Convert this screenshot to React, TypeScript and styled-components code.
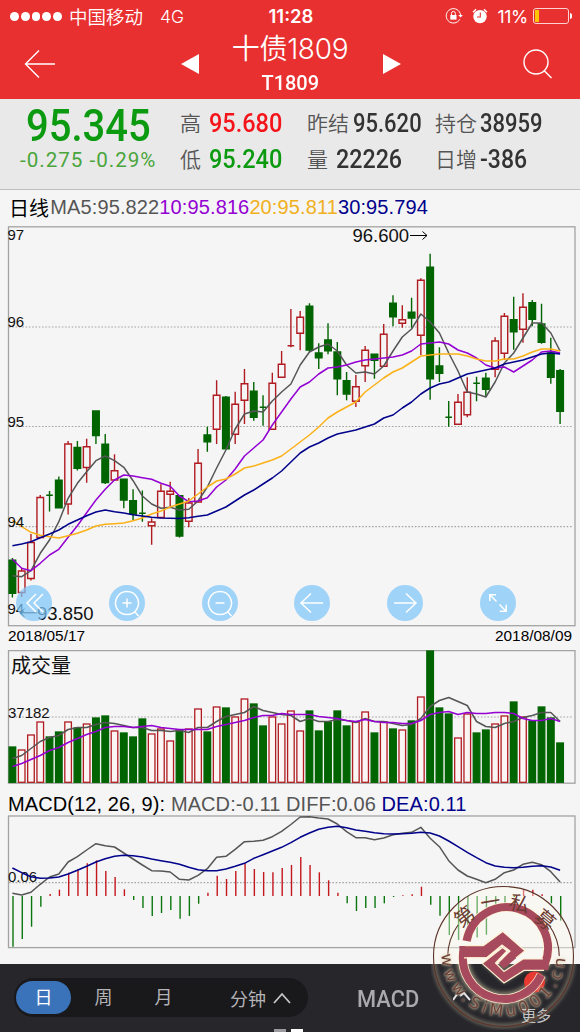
import { styled, createGlobalStyle } from 'styled-components';

const RED = '#b01c22';
const GREEN = '#006400';
const GRAY = '#555';
const PURPLE = '#9400d3';
const ORANGE = '#fbb117';
const NAVY = '#00008b';

const FIRST_X = 12.4;
const STEP = 9.283;

const getX = (index: number) => FIRST_X + STEP * index;

// [body top, body bottom, wick top, wick bottom, rising]
const CANDLES = [
  [560.3, 593.3, 558, 597.5, 0],
  [571, 592.5, 568, 597, 1],
  [542.5, 578.5, 534, 580.5, 1],
  [497.5, 537.5, 495, 537.5, 1],
  [495.3, 495.3, 491, 511.5, 0],
  [480.3, 507.7, 476.5, 507.7, 0],
  [444, 504, 441, 514.5, 1],
  [447.5, 468.3, 441, 470.5, 0],
  [446.7, 467.5, 438.7, 482.7, 1],
  [411, 435.5, 411, 444, 0],
  [444.3, 482.6, 434, 484, 0],
  [470.7, 480, 454.3, 480, 1],
  [479.3, 500, 479.3, 508.3, 0],
  [500.7, 514, 489.3, 520, 0],
  [513.3, 513.3, 490.5, 521.7, 0],
  [522, 525.7, 518.3, 544.7, 1],
  [491.3, 517.5, 484.3, 517.5, 1],
  [491.3, 494.3, 481.7, 506.7, 1],
  [495.7, 536, 495, 537.5, 0],
  [503, 521.3, 498, 527.3, 1],
  [463.3, 502, 449, 502, 1],
  [435, 441.7, 426.7, 451.7, 0],
  [395.3, 429.3, 380.3, 444, 1],
  [397.3, 448.7, 396, 449, 0],
  [404.3, 434.3, 391.7, 444, 1],
  [383.7, 400.3, 369, 424, 1],
  [391.3, 417.3, 382, 420.7, 0],
  [407.3, 407.3, 395.3, 425.7, 0],
  [383.3, 429.3, 372.7, 429.3, 1],
  [364.3, 377.3, 351, 377.3, 1],
  [345.7, 345.7, 309, 347.3, 1],
  [317.3, 333.3, 311, 350.3, 1],
  [306.3, 350, 303.3, 351.7, 0],
  [353, 357.7, 343.3, 369, 0],
  [340, 350.7, 323.3, 354.3, 0],
  [352, 378.7, 342, 395.3, 0],
  [380.7, 394, 372, 400.3, 0],
  [386.7, 401.3, 375, 407, 1],
  [350.3, 365.7, 346, 382, 1],
  [354.3, 360.3, 354.3, 378.7, 0],
  [334.3, 366.3, 324, 366.3, 1],
  [303.3, 316.7, 295.3, 326.3, 0],
  [319.7, 323.3, 305.3, 327.7, 1],
  [312.3, 318, 297.7, 327.7, 0],
  [280.3, 335.3, 278.3, 355, 1],
  [267.3, 378.7, 253.7, 399.7, 0],
  [366, 373.3, 347.3, 382, 0],
  [417.3, 417.3, 401, 426.7, 0],
  [402.3, 424.3, 394, 424.3, 1],
  [392.3, 414.7, 377.3, 417.3, 1],
  [383.3, 383.3, 376.7, 401.3, 0],
  [378.3, 389.3, 372.7, 396.7, 0],
  [341, 369.3, 337.3, 377.3, 1],
  [316.3, 353.3, 313, 360, 1],
  [319.7, 331.7, 296.7, 349.7, 0],
  [307.3, 329.3, 293.3, 342.7, 1],
  [302.7, 319.3, 300, 326.3, 0],
  [324, 342.3, 303.7, 343.7, 0],
  [353, 377.3, 337.7, 383.7, 0],
  [370.7, 411.3, 369, 424, 0],
];

const MA5 = [
  575.7, 576.7, 570.7, 553.3, 540, 521.7, 498.3, 483.3, 471.7, 460.7, 456, 460.7,
  467.3, 480.7, 496, 504, 508.3, 507.3, 510, 509.3, 501, 487, 468, 450, 429, 414,
  411, 412, 401, 392, 384, 365, 352, 347, 344, 351, 365, 373, 372, 374, 366, 351,
  337, 329, 314, 322, 333, 353, 371, 392, 394, 397, 382, 363, 353, 338, 323, 323,
  333, 351,
];

const MA10 = [
  559.3, 568.3, 570.7, 563.3, 555, 549.3, 537.3, 525.7, 512.7, 500, 489.3, 480,
  475, 476, 477.7, 479.3, 483.3, 486.3, 496, 501.7, 501, 497.7, 487, 480, 469,
  456, 448, 440, 425, 412, 399, 387, 382, 374, 368, 367, 365, 362, 360, 359, 358,
  357, 355, 351, 344, 343, 342, 344, 350, 353, 358, 365, 368, 367, 372, 366, 360,
  352, 351, 353,
];

const MA20 = [
  520, 526.7, 532.3, 535.3, 536.7, 538, 535.7, 533.3, 530, 526, 524.3, 523.7, 523,
  520.7, 518, 514, 511, 507, 504, 501, 494, 487, 481, 479, 474, 468, 466, 463,
  460, 456, 449, 442, 435, 427, 418, 412, 407, 402, 392, 385, 378, 372, 368, 362,
  356, 355, 354, 354, 354, 356, 359, 361, 361, 359, 359, 356, 352, 349, 349, 351,
];

const MA30 = [
  545.7, 544, 541.7, 537.7, 534, 530, 524.3, 520, 515.7, 512, 510, 511.7, 513,
  514.7, 516, 517.3, 518, 518.3, 518.5, 517.7, 516.3, 515, 511, 507, 501, 495,
  490, 484, 478, 471, 462, 453, 447, 443, 438, 434, 432, 430, 427, 424, 418, 415,
  408, 402, 394, 388, 384, 382, 378, 374, 372, 370, 368, 364, 362, 360, 357, 354,
  353, 354,
];

// height of every volume bar, and of the two averages over it
const VOLUMES = [
  36, 33, 48, 61, 46, 51, 61, 55, 59, 65, 67, 52, 50, 46, 64, 49, 54, 42, 53, 54,
  74, 51, 76, 75, 66, 84, 79, 57, 66, 59, 72, 52, 72, 52, 61, 72, 57, 61, 71, 50,
  61, 54, 53, 62, 86, 132, 75, 69, 45, 69, 50, 53, 59, 67, 81, 66, 62, 76, 65, 40,
];

const VOLUME_MA5 = [
  24, 27, 34, 41, 45, 47, 53, 55, 55, 58, 60, 59, 57, 55, 55, 52, 52, 51, 52, 50,
  55, 55, 61, 66, 68, 70, 76, 72, 70, 68, 67, 61, 64, 61, 61, 63, 62, 60, 64, 61,
  61, 59, 57, 58, 64, 76, 82, 85, 81, 77, 61, 56, 55, 59, 61, 65, 67, 70, 70, 61,
];

const VOLUME_MA10 = [
  16, 19, 23, 27, 32, 35, 40, 44, 48, 51, 55, 56, 56, 55, 56, 57, 55, 54, 53, 53,
  53, 53, 56, 58, 60, 62, 65, 67, 67, 69, 68, 68, 68, 66, 65, 64, 62, 61, 63, 61,
  60, 60, 59, 59, 62, 68, 70, 71, 68, 70, 69, 69, 70, 70, 69, 64, 62, 62, 64, 61,
];

const MACD_BARS = [
  -50.7, -43, -30.7, -10.7, 2, 6.3, 23.3, 26.7, 32.7, 35.7, 25, 19, 6.7, -4, -12,
  -20, -17, -14, -22.7, -20, -7.7, 3.3, 20.3, 17, 25, 32.7, 27, 24, 23.7, 28, 31,
  39, 31, 23.7, 15.7, 3.3, -7.3, -15, -12, -12, -7.3, -1, 0.7, 1.7, 9.3, -8.7,
  -19.7, -39, -44, -43, -41.5, -38.7, -17, -9, -1, 6.7, 6.3, 1.7, -7.3, -24.7,
];

const DIFF = [
  893.3, 895, 892.3, 884.3, 877, 874, 862, 856.7, 850, 843.7, 845.7, 847, 853,
  859, 865, 870.7, 871, 872, 879.3, 880, 875.3, 868.7, 857.3, 856.3, 849.3, 841.7,
  841.3, 840.3, 836.7, 831.3, 824.5, 817, 816.7, 818, 819, 824, 831.7, 837.7,
  837.7, 839.7, 838, 834.7, 833.3, 832.3, 827.3, 838.3, 846.7, 860.7, 870, 876,
  879.3, 882.7, 879.3, 872.7, 870, 864.3, 862.3, 864.7, 871.7, 882,
];

const DEA = [
  868, 872.7, 876.7, 878.3, 878, 877, 874, 870.3, 866.3, 862, 858.7, 856.3, 855.3,
  855.7, 857, 859, 860.7, 862.3, 864.3, 867.3, 869.7, 870.7, 870.7, 869, 866.3,
  863.3, 858.3, 854.7, 851, 847.3, 842.7, 837.3, 833, 829.3, 827.3, 826.3, 827.7,
  830, 831.3, 832.7, 833.7, 834, 833.7, 833.3, 832.3, 833, 836, 841, 846.7, 852.3,
  857.7, 862.7, 866, 867.3, 867.7, 867.3, 866.3, 865.7, 867, 870.3,
];

interface LineProps {
  values: number[];
  color: string;
  base?: number;
}

const Line = ({ values, color, base }: LineProps) => (
  <polyline
    fill="none"
    stroke={color}
    strokeWidth={1.5}
    strokeLinejoin="round"
    points={values
      .map((v, i) => `${getX(i)},${base === undefined ? v : base - v}`)
      .join(' ')}
  />
);

const GridLine = ({ y }: { y: number }) => (
  <line
    x1={9}
    x2={573}
    y1={y}
    y2={y}
    stroke="#a5a5a5"
    strokeWidth={1.2}
    strokeDasharray="1.6 1.7"
  />
);

const PriceChart = () => (
  <Chart viewBox="0 226 580 401" $height={401}>
    <rect x={8.5} y={226.8} width={566.5} height={398.9} />
    {[327, 426.5, 526.7].map((y) => (
      <GridLine key={y} y={y} />
    ))}
    {CANDLES.map(([top, bottom, high, low, rising], i) => {
      const x = getX(i);
      const color = rising ? RED : GREEN;
      if (top === bottom) {
        return (
          <path
            key={i}
            d={`M${x} ${high}V${low}M${x - 3.3} ${top}H${x + 3.3}`}
            stroke={color}
            strokeWidth={1.4}
          />
        );
      }
      return (
        <g key={i} stroke={color} strokeWidth={1.4}>
          <path d={`M${x} ${high}V${top}M${x} ${bottom}V${low}`} />
          <path
            d={`M${x - 3.3} ${top}h6.6V${bottom}h-6.6Z`}
            fill={rising ? '#f5f5f5' : color}
          />
        </g>
      );
    })}
    <Line values={MA5} color={GRAY} />
    <Line values={MA10} color={PURPLE} />
    <Line values={MA20} color={ORANGE} />
    <Line values={MA30} color={NAVY} />
    <AxisText x={7.5} y={240}>97</AxisText>
    <AxisText x={7.5} y={326.7}>96</AxisText>
    <AxisText x={7.5} y={427}>95</AxisText>
    <AxisText x={7.5} y={527}>94</AxisText>
    <AxisText x={7.5} y={613.7}>94</AxisText>
    <AxisText x={352.5} y={242} $size={18.5}>96.600</AxisText>
    <path d="M410 235.5H427M422.5 231.5L427 235.5L422.5 239.5" stroke="#000" fill="none" />
    <AxisText x={37} y={620} $size={18.5}>93.850</AxisText>
    <path d="M37 612.8H20M24.5 608.8L20 612.8L24.5 616.8" stroke="#000" fill="none" />
  </Chart>
);

const VolumeChart = () => (
  <Chart viewBox="0 650 580 134" $height={134}>
    <rect x={8.5} y={650.6} width={566.5} height={132.6} />
    <GridLine y={717} />
    {VOLUMES.map((v, i) => {
      const rising = CANDLES[i][4];
      return (
        <VolumeBar
          key={i}
          x={getX(i) - 3.3}
          y={783 - v}
          width={6.6}
          height={v - 0.7}
          $rising={!!rising}
        />
      );
    })}
    <Line values={VOLUME_MA5} color={GRAY} base={782.5} />
    <Line values={VOLUME_MA10} color={PURPLE} base={782.5} />
    <AxisText x={11} y={672.5} $size={20}>成交量</AxisText>
    <AxisText x={8} y={718.3}>37182</AxisText>
  </Chart>
);

const MacdChart = () => (
  <Chart viewBox="0 815 580 134" $height={134}>
    <rect x={8.5} y={816} width={566.5} height={131.6} />
    <GridLine y={882.6} />
    {MACD_BARS.map((v, i) => (
      <path
        key={i}
        d={`M${getX(i) + 0.6} 896V${896 - v}`}
        stroke={v > 0 ? '#c4171d' : '#0a760e'}
        strokeWidth={1.4}
      />
    ))}
    <AxisText x={8} y={882.3}>0.06</AxisText>
    <Line values={DIFF} color={GRAY} />
    <Line values={DEA} color={NAVY} />
  </Chart>
);

const CHART_BUTTONS = [
  { id: 'rewind', path: 'M20 9L11 18L20 27M27 9L18 18L27 27' },
  {
    id: 'zoom-in',
    path: 'M18 6.5a11.5 11.5 0 1 0 .01 0M25.5 26.5L29.5 31M18 13.5V22.5M13.5 18H22.5',
  },
  {
    id: 'zoom-out',
    path: 'M18 6.5a11.5 11.5 0 1 0 .01 0M25.5 26.5L29.5 31M13.5 18H22.5',
  },
  { id: 'left', path: 'M29 18H7M17 8.5L7 18L17 27.5' },
  { id: 'right', path: 'M7 18H29M19 8.5L29 18L19 27.5' },
  {
    id: 'expand',
    path: 'M16 9.8H9.8V16M9.8 9.8L16.5 16.5M19.5 19.5L26 26.2M26.2 19.8V26.2H19.8',
  },
];

const RING_TOP = 'M35.6 57A41 41 0 1 1 113.8 80';
const RING_BOTTOM = 'M32.4 67.5A41 41 0 0 0 110.2 91';

const Watermark = () => (
  <WatermarkSvg viewBox="0 0 146 146">
    <defs>
      <filter id="glow" x="-20%" y="-20%" width="140%" height="140%">
        <feGaussianBlur stdDeviation="2" />
      </filter>
      <clipPath id="upper">
        <rect width={146} height={80} />
      </clipPath>
      <clipPath id="lower">
        <rect y={80} width={146} height={66} />
      </clipPath>
      <path id="arc" d="M10.5 70A62 62 0 0 0 134.5 70" />
      <g id="emblem">
        <path d={RING_TOP} fill="none" strokeWidth="8" />
        <path d={RING_BOTTOM} fill="none" strokeWidth="8" />
        <path
          stroke="none"
          d="M28.3 62H52.3L71.7 47.7L94 66.7L73 84.5L67.5 78.7L79 67L71 61L55.7 73.3H28.5Z"
        />
        <path
          stroke="none"
          d="M117.5 86H93L73 98.7L51.3 79.3L71.5 63.5L76 67L64.5 79L73 87.5L92 75H117.8Z"
        />
      </g>
    </defs>
    <circle cx="72.5" cy="72.5" r="70" fill="#fffbef" opacity=".42" clipPath="url(#upper)" />
    <g clipPath="url(#lower)">
      <g filter="url(#glow)" opacity=".6" stroke="#d9c9a8" fill="#d9c9a8">
        <circle cx="72.5" cy="72.5" r="69.5" fill="none" strokeWidth="3" />
        <path d={RING_TOP} fill="none" strokeWidth="13" />
        <path d={RING_BOTTOM} fill="none" strokeWidth="13" />
        <use href="#emblem" />
      </g>
    </g>
    <circle cx="103.5" cy="98" r="10.5" fill="#e83a32" />
    <circle cx="72.5" cy="72.5" r="70" fill="none" stroke="#5b3328" strokeWidth="1.1" />
    <path
      d="M16.7 72A56 56 0 0 1 27 41M128.3 72A56 56 0 0 0 118 41"
      fill="none"
      stroke="#5b3328"
      strokeWidth="1.1"
    />
    <path d={RING_TOP} fill="none" stroke="#fff3d2" strokeWidth="9.4" />
    <path d={RING_BOTTOM} fill="none" stroke="#fff3d2" strokeWidth="9.4" />
    <use href="#emblem" stroke="#a84a5e" fill="#a84a5e" />
    <path
      d="M33 73.8H55.7L71 61L79 67L67.5 78.7M51.5 79.3L71.5 63.5L76 67L64.5 79L73 87.5L92 75H112M34 61.6H52.3L71.7 47.4L94 66.7L85 74M51.3 79.6L73 99L93 86.4H113"
      fill="none"
      stroke="#fff0cf"
      strokeWidth="1.2"
    />
    <SealText transform="translate(33.5 32.5) rotate(-38)">第</SealText>
    <SealText transform="translate(59.5 18) rotate(-10)">一</SealText>
    <SealText transform="translate(88.5 20) rotate(14)">私</SealText>
    <SealText transform="translate(114 36) rotate(40)">募</SealText>
    <RingText>
      <textPath href="#arc" textLength="190">www.SiMu001.cn</textPath>
    </RingText>
  </WatermarkSvg>
);

const App = () => (
  <Page>
    <GlobalStyle />
    <Header>
      <StatusBar>
        <Carrier>
          <Signal>
            {[0, 1, 2, 3, 4].map((dot) => (
              <SignalDot key={dot} />
            ))}
          </Signal>
          <span>中国移动</span>
          <Network>4G</Network>
        </Carrier>
        <Clock>11:28</Clock>
        <StatusRight>
          <svg width="18" height="18" viewBox="0 0 18 18" fill="none" stroke="#fff">
            <path d="M14.8 12.2A7.2 7.2 0 1 1 15.6 8.2" />
            <path d="M13.2 8L15.6 10.6L17.8 8" fill="#fff" stroke="none" />
            <rect x="5.3" y="8" width="6.2" height="4.6" fill="#fff" stroke="none" />
            <path d="M6.5 8V6.3a1.9 1.9 0 0 1 3.8 0V8" />
          </svg>
          <svg width="18" height="18" viewBox="0 0 18 18">
            <circle cx="9" cy="9.6" r="6.7" fill="#fff" />
            <path d="M2 5.2L5 2.3M16 5.2L13 2.3" stroke="#fff" strokeWidth="1.5" />
            <path d="M9.3 5.5V10H6" stroke="#e93030" strokeWidth="1.1" fill="none" />
          </svg>
          <Percent>11%</Percent>
          <Battery>
            <BatteryLevel />
          </Battery>
          <BatteryCap />
        </StatusRight>
      </StatusBar>
      <TitleBar>
        <svg width="32" height="30" viewBox="0 0 32 30" fill="none" stroke="#fff" strokeWidth="1.4">
          <path d="M31 15H1.5M15 1.5L1.5 15L15 28.5" />
        </svg>
        <TitleNav>
          <Triangle viewBox="0 0 18 20">
            <path d="M18 0V20L0 10Z" />
          </Triangle>
          <Titles>
            <Title>十债1809</Title>
            <Code>T1809</Code>
          </Titles>
          <Triangle viewBox="0 0 18 20">
            <path d="M0 0V20L18 10Z" />
          </Triangle>
        </TitleNav>
        <svg width="30" height="30" viewBox="0 0 30 30" fill="none" stroke="#fff" strokeWidth="1.4">
          <circle cx="13" cy="13" r="12" />
          <path d="M21 21.5L28.5 29" />
        </svg>
      </TitleBar>
    </Header>

    <Quote>
      <LastPrice>
        <Price>95.345</Price>
        <Change>-0.275 -0.29%</Change>
      </LastPrice>
      <QuoteColumn $width={127}>
        <QuoteRow>
          <Label>高</Label>
          <Value $color="#f5141a" $left={8} $scale={0.94}>95.680</Value>
        </QuoteRow>
        <QuoteRow>
          <Label>低</Label>
          <Value $color="#0c9a10" $left={8} $scale={0.94}>95.240</Value>
        </QuoteRow>
      </QuoteColumn>
      <QuoteColumn $width={128}>
        <QuoteRow>
          <Label>昨结</Label>
          <Value $left={4} $scale={0.88}>95.620</Value>
        </QuoteRow>
        <QuoteRow>
          <Label>量</Label>
          <Value $left={8} $scale={0.93}>22226</Value>
        </QuoteRow>
      </QuoteColumn>
      <QuoteColumn $width={130}>
        <QuoteRow>
          <Label>持仓</Label>
          <Value $left={3} $scale={0.88}>38959</Value>
        </QuoteRow>
        <QuoteRow>
          <Label>日增</Label>
          <Value $left={3} $scale={0.92}>-386</Value>
        </QuoteRow>
      </QuoteColumn>
    </Quote>

    <MaRow>
      <Colored $color="#000">日线</Colored>
      <Colored $color={GRAY}>MA5:95.822</Colored>
      <Colored $color={PURPLE}>10:95.816</Colored>
      <Colored $color="#f0b020">20:95.811</Colored>
      <Colored $color={NAVY}>30:95.794</Colored>
    </MaRow>

    <ChartArea>
      <PriceChart />
      <ChartButtons>
        {CHART_BUTTONS.map(({ id, path }) => (
          <ChartButton key={id} aria-label={id}>
            <svg width="36" height="36" viewBox="0 0 36 36">
              <path d={path} fill="none" stroke="#fff" strokeWidth="1.5" />
            </svg>
          </ChartButton>
        ))}
      </ChartButtons>
    </ChartArea>
    <Dates>
      <span>2018/05/17</span>
      <span>2018/08/09</span>
    </Dates>
    <VolumeChart />
    <MacdTitle>
      <Colored $color="#000">MACD(12, 26, 9): </Colored>
      <Colored $color={GRAY}>MACD:-0.11 DIFF:0.06 </Colored>
      <Colored $color={NAVY}>DEA:0.11</Colored>
    </MacdTitle>
    <MacdChart />

    <BottomBar>
      <Periods>
        <Period $active>日</Period>
        <Period>周</Period>
        <Period>月</Period>
        <Minutes>
          分钟
          <svg width="18" height="12" viewBox="0 0 18 12">
            <path d="M1 11L9 2L17 11" fill="none" stroke="#c5c5c8" strokeWidth="1.8" />
          </svg>
        </Minutes>
      </Periods>
      <Indicator>MACD</Indicator>
      <Draw width="18" height="14" viewBox="0 0 18 14">
        <path d="M5 1L0 8M7 4L11 1L17 8" fill="none" stroke="#e4e4e8" strokeWidth="2" />
      </Draw>
      <More>更多</More>
      <PageMarks>
        <PageMark $color="#9a9aa0" />
        <PageMark $color="#fff" />
      </PageMarks>
    </BottomBar>
    <Watermark />
  </Page>
);

export default App;

const GlobalStyle = createGlobalStyle`
  body {
    margin: 0;
    background: #f5f5f5;
  }
`;

const Page = styled.div`
  position: relative;
  display: flex;
  flex-direction: column;
  width: 580px;
  height: 1032px;
  overflow: hidden;
  background: #f5f5f5;
  font-family: 'Liberation Sans', 'Noto Sans CJK SC', sans-serif;
`;

const Header = styled.header`
  height: 99px;
  background: #e93030;
  color: #fff;
`;

const StatusBar = styled.div`
  display: grid;
  grid-template-columns: 1fr 60px 1fr;
  align-items: center;
  height: 32px;
  padding: 0 8px 0 10px;
  font-size: 18.5px;
  font-family: Inter, 'Noto Sans CJK SC', sans-serif;
`;

const Carrier = styled.div`
  display: flex;
  align-items: center;
  font-weight: 350;
`;

const Signal = styled.div`
  display: flex;
  gap: 2px;
  margin-right: 7px;
`;

const SignalDot = styled.i`
  width: 8.8px;
  height: 9px;
  border-radius: 50%;
  background: #fff;
`;

const Network = styled.span`
  margin-left: 17px;
  font-size: 17.5px;
`;

const Clock = styled.div`
  text-align: center;
  font-weight: 600;
  font-size: 18.5px;
`;

const StatusRight = styled.div`
  display: flex;
  align-items: center;
  justify-content: flex-end;

  svg + svg {
    margin: 0 8px 0 8px;
  }
`;

const Percent = styled.span`
  font-size: 17.5px;
  letter-spacing: -0.3px;
`;

const Battery = styled.div`
  box-sizing: border-box;
  width: 36px;
  height: 16px;
  margin-left: 5px;
  padding: 1px;
  border: 1px solid #ffd2d2;
  border-radius: 3px;
`;

const BatteryLevel = styled.div`
  width: 4px;
  height: 12px;
  background: #ffc400;
`;

const BatteryCap = styled.i`
  width: 2px;
  height: 6px;
  margin-left: 1px;
  border-radius: 0 2px 2px 0;
  background: #fff;
`;

const TitleBar = styled.div`
  display: flex;
  align-items: center;
  justify-content: space-between;
  height: 64px;
  padding: 0 27px 0 24px;
`;

const TitleNav = styled.div`
  display: flex;
  align-items: center;
  justify-content: space-between;
  width: 221px;
  margin-left: 3px;
`;

const Triangle = styled.svg`
  width: 18px;
  height: 20px;
  fill: #fff;
`;

const Titles = styled.div`
  margin-left: -2px;
  padding-top: 3px;
  text-align: center;
`;

const Title = styled.div`
  font-family: Inter, 'Noto Sans CJK SC', sans-serif;
  font-size: 28px;
  font-weight: 350;
  line-height: 34px;
  letter-spacing: -0.3px;
`;

const Code = styled.div`
  font: 500 21px/34px Roboto, sans-serif;
  transform: scaleX(0.95);
`;

const Quote = styled.section`
  box-sizing: border-box;
  display: flex;
  height: 91px;
  padding-top: 7px;
  border-bottom: 1px solid #bfbfbf;
  background: #e9e9e9;
`;

const LastPrice = styled.div`
  width: 180px;
`;

const Price = styled.div`
  height: 41px;
  padding-left: 26px;
  color: #0c9a10;
  font: 500 43.5px/41px Roboto, sans-serif;
  transform: scaleX(0.92);
  transform-origin: 26px 0;
`;

const Change = styled.div`
  padding-left: 20px;
  color: #4aa53c;
  font: 400 20.6px/26px Roboto, sans-serif;
  letter-spacing: 1px;
`;

const QuoteColumn = styled.div<{ $width: number }>`
  width: ${({ $width }) => $width}px;
`;

const QuoteRow = styled.div`
  display: flex;
  align-items: center;
  height: 36px;
`;

const Label = styled.span`
  padding-bottom: 3px;
  color: #555;
  font: 350 21px/33px 'Noto Sans CJK SC', sans-serif;
`;

const Value = styled.span<{ $color?: string; $left: number; $scale: number }>`
  margin-left: ${({ $left }) => $left}px;
  color: ${({ $color }) => $color ?? '#333'};
  font: 500 25px/36px Roboto, sans-serif;
  transform: scaleX(${({ $scale }) => $scale});
  transform-origin: left;
`;

const MaRow = styled.div`
  display: flex;
  align-items: center;
  height: 34px;
  padding: 0 0 2px 9px;
  font-size: 20px;
  letter-spacing: 0.12px;
`;

const Colored = styled.span<{ $color: string }>`
  color: ${({ $color }) => $color};
  white-space: pre;

  ${MaRow} > &:first-child {
    margin-right: 1px;
  }
`;

const ChartArea = styled.div`
  position: relative;
  height: 401px;
`;

const Chart = styled.svg<{ $height: number }>`
  display: block;
  flex: none;
  width: 580px;
  height: ${({ $height }) => $height}px;

  > rect:first-child {
    fill: none;
    stroke: #a3a3a3;
    stroke-width: 1.3;
  }
`;

const VolumeBar = styled.rect<{ $rising: boolean }>`
  fill: ${({ $rising }) => ($rising ? '#fbf6f4' : GREEN)};
  stroke: ${({ $rising }) => ($rising ? RED : GREEN)};
  stroke-width: 1.3;
`;

const AxisText = styled.text<{ $size?: number }>`
  font-size: ${({ $size }) => $size ?? 15}px;
  fill: #111;
`;

const ChartButtons = styled.div`
  position: absolute;
  top: 359px;
  left: 16px;
  display: flex;
  gap: 56.8px;
`;

const ChartButton = styled.button`
  width: 36px;
  height: 36px;
  padding: 0;
  border: 0;
  border-radius: 50%;
  background: rgba(126, 198, 250, 0.72);
`;

const Dates = styled.div`
  display: flex;
  justify-content: space-between;
  height: 23px;
  padding: 0 8px 0 8px;
  font-size: 15.4px;
  line-height: 18px;
`;

const MacdTitle = styled.div`
  height: 31px;
  padding-left: 8px;
  font-size: 20px;
  line-height: 40px;
  letter-spacing: 0.1px;
`;

const BottomBar = styled.footer`
  position: relative;
  display: flex;
  align-items: flex-start;
  height: 54px;
  margin-top: 15px;
  padding: 14px 0 0 14px;
  background: #26262b;
`;

const Periods = styled.div`
  box-sizing: border-box;
  display: flex;
  align-items: center;
  gap: 5px;
  width: 294px;
  height: 39px;
  padding-left: 2px;
  border-radius: 20px;
  background: #19191b;
  color: #b4b4b8;
  font-size: 18px;
`;

const Period = styled.div<{ $active?: boolean }>`
  width: 55px;
  height: 33px;
  border-radius: 17px;
  background: ${({ $active }) => ($active ? '#3b73ba' : 'transparent')};
  color: ${({ $active }) => ($active ? '#fff' : 'inherit')};
  line-height: 34px;
  text-align: center;
`;

const Minutes = styled.div`
  display: flex;
  align-items: center;
  gap: 7px;
  height: 36px;
  margin-left: 34px;
`;

const Indicator = styled.div`
  width: 96px;
  margin-left: 49px;
  color: #a9a9ae;
  font: 500 23.5px/42px Roboto, sans-serif;
  transform: scaleX(0.93);
  transform-origin: left;
`;

const Draw = styled.svg`
  margin-top: 14px;
`;

const More = styled.div`
  margin: 26px 0 0 50px;
  color: #c4c4c8;
  font-size: 15px;
`;

const PageMarks = styled.div`
  position: absolute;
  bottom: 0;
  left: 274px;
  display: flex;
  gap: 5px;
`;

const PageMark = styled.i<{ $color: string }>`
  width: 12px;
  height: 3px;
  background: ${({ $color }) => $color};
`;

const WatermarkSvg = styled.svg`
  position: absolute;
  top: 884px;
  left: 431px;
  width: 146px;
  height: 146px;
`;

const SealText = styled.text`
  fill: #6b3a30;
  font-size: 20px;
  text-anchor: middle;
  dominant-baseline: central;
`;

const RingText = styled.text`
  fill: #6d4038;
  font-family: 'DejaVu Sans', sans-serif;
  font-size: 16px;
  filter: drop-shadow(0 0 1px #e0d2b4) drop-shadow(0 0 2px rgba(224, 210, 180, 0.6));
`;
